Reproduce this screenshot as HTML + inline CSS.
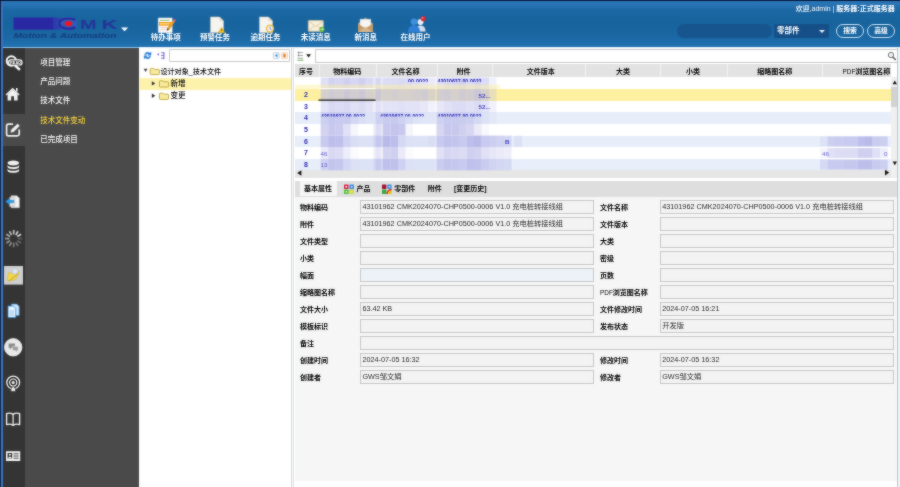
<!DOCTYPE html>
<html lang="zh-CN">
<head>
<meta charset="utf-8">
<title>CMK PLM</title>
<style>
*{box-sizing:border-box;margin:0;padding:0}
html,body{width:900px;height:487px;overflow:hidden;background:#fff}
body{position:relative;font-family:"Liberation Sans","Noto Sans CJK SC",sans-serif;font-size:7.5px;color:#111;line-height:1}
.abs{position:absolute}
#w{position:absolute;left:-6px;top:-6px;width:912px;height:499px;filter:url(#sb)}
#c{position:absolute;left:6px;top:6px;width:900px;height:487px}
#hdr{position:absolute;left:-6px;top:0;width:912px;height:47px;background:linear-gradient(#2b76b6 0,#2873b3 10%,#1b67a3 22%,#17639d 50%,#1a68a4 80%,#2172b2 100%)}
#topline{position:absolute;left:-6px;top:-6px;width:912px;height:7.400px;background:#081d40;z-index:5}
#leftedge{position:absolute;left:-6px;top:0;width:8.700px;height:493px;background:linear-gradient(90deg,#10264c 0,#10264c 7px,#3a74bc 7px)}
#iconcol{position:absolute;left:2px;top:48px;width:23px;height:445px;background:#343434}
#menu{position:absolute;left:25px;top:48px;width:114px;height:445px;background:#4a4a4a}
#iconact{position:absolute;left:2px;top:114px;width:23px;height:32px;background:#4a4a4a}
.mi{position:absolute;left:40.200px;margin-top:.5px;color:#fbfbfb;font-weight:500;font-size:7.5px;white-space:nowrap;height:10px;line-height:10px}
.mi.act{color:#f5d23c}
.tb{position:absolute;top:32.8px;width:60px;text-align:center;color:#fff;font-size:7.5px;font-weight:bold;white-space:nowrap;height:10px;line-height:10px}
#tree{position:absolute;left:139px;top:48px;width:152px;height:445px;background:#fff}
#split{position:absolute;left:290.800px;top:48px;width:3.700px;height:445px;background:#f6f8fa;border-left:1px solid #d5d9dd;border-right:1px solid #dfe3e7}
.tin{position:absolute;background:#fff;border:1px solid #c9c9c9;border-radius:1px}
.tr{position:absolute;left:139.500px;width:151.300px;height:12.400px;line-height:12.400px;font-size:7.5px;white-space:nowrap;font-weight:500;color:#000}
#ghead{position:absolute;left:294.500px;top:63.600px;width:596px;height:13.600px;background:#e3e3e3}
.gh{position:absolute;top:64.600px;height:13px;line-height:13px;font-size:7px;font-weight:bold;text-align:center;white-space:nowrap;color:#000}
.row{position:absolute;left:295px;width:596px;height:11.7px}
.rn{position:absolute;left:295px;width:22px;text-align:center;font-size:7px;font-weight:bold;color:#2a2ab0;height:11.7px;line-height:11.7px}
#tabs{position:absolute;left:294.500px;top:180.700px;width:602.500px;height:16px;background:#dedede}
.tab{position:absolute;top:181px;height:15px;line-height:15px;font-size:7px;font-weight:bold;white-space:nowrap;color:#000}
.lbl{position:absolute;font-size:7px;font-weight:bold;white-space:nowrap;height:13px;line-height:13px;color:#000;margin-top:.8px}
.inp{position:absolute;height:13.400px;line-height:12.400px;margin-top:-.4px;font-size:7.250px;border:1px solid #c6c6c6;background:#f3f3f3;white-space:nowrap;padding-left:1.200px;color:#262626;overflow:hidden}
</style>
</head>
<body>
<svg width="0" height="0" style="position:absolute"><filter id="sb" x="0" y="0" width="100%" height="100%" color-interpolation-filters="sRGB"><feGaussianBlur in="SourceGraphic" stdDeviation="0.8" result="b"/><feComposite in="SourceGraphic" in2="b" operator="arithmetic" k1="0" k2="0.55" k3="0.45" k4="0"/></filter></svg>
<div id="w"><div id="c">
<div id="hdr"></div>
<div id="topline"></div>


<!-- logo -->
<svg class="abs" style="left:10px;top:14px" width="125" height="28" viewBox="10 14 125 28">
<defs><clipPath id="lc"><rect x="53" y="17.5" width="24" height="12.2"/></clipPath></defs>
<rect x="13.5" y="17.5" width="41.500" height="12.2" fill="#2a27a3"/>
<g clip-path="url(#lc)">
<rect x="53" y="17.5" width="8" height="12.2" fill="#2b3cab"/>
<ellipse cx="67.5" cy="23.6" rx="10.5" ry="6.8" fill="#2f5cb8"/>
<path d="M75.2 19.9A9.4 5.3 0 1 0 75.2 27.3" fill="none" stroke="#28299c" stroke-width="2.3"/>
<ellipse cx="68.5" cy="23.6" rx="3.9" ry="2.7" fill="#f0141e"/>
</g>
<text x="80" y="29.4" font-family="Liberation Sans, sans-serif" font-weight="bold" font-size="13.5" textLength="16.5" lengthAdjust="spacingAndGlyphs" fill="#26339a">M</text>
<text x="101.5" y="29.4" font-family="Liberation Sans, sans-serif" font-weight="bold" font-size="13.5" textLength="16" lengthAdjust="spacingAndGlyphs" fill="#26339a">K</text>
<text x="13.5" y="37.900" font-family="Liberation Sans, sans-serif" font-style="italic" font-weight="bold" font-size="6.4" textLength="103" lengthAdjust="spacingAndGlyphs" fill="#173c7e">Motion &amp; Automation</text>
<path d="M121 27.4h7.2l-3.6 3.8z" fill="#fff"/>
</svg>
<!-- header right -->
<div class="abs" style="left:700px;top:3.900px;width:194.700px;text-align:right;color:#fff;font-size:7px;font-weight:500;height:10px;line-height:10px;white-space:nowrap">欢迎,admin | <b>服务器:正式服务器</b></div>
<div class="abs" style="left:677px;top:24px;width:95px;height:14px;border-radius:7px;background:#17558f"></div>
<div class="abs" style="left:774px;top:24px;width:55px;height:14px;border-radius:2px;background:#164f88;color:#fff;font-weight:bold;font-size:7.5px;line-height:14px;padding-left:3px">零部件</div>
<div class="abs" style="left:819px;top:30px;width:0;height:0;border-left:3px solid transparent;border-right:3px solid transparent;border-top:3.5px solid #e8f0f8"></div>
<div class="abs" style="left:836px;top:24px;width:28px;height:14px;border-radius:7px;border:1px solid #cfe0f0;color:#fff;font-weight:bold;font-size:6.800px;line-height:12px;text-align:center">搜索</div>
<div class="abs" style="left:867px;top:24px;width:28px;height:14px;border-radius:7px;border:1px solid #cfe0f0;color:#fff;font-weight:bold;font-size:6.800px;line-height:12px;text-align:center">高级</div>

<!-- toolbar icons -->
<svg class="abs" style="left:156px;top:15px" width="22" height="20" viewBox="156 15 22 20">
<rect x="158.200" y="17.900" width="14" height="14.800" rx=".6" fill="#fbfbfa" stroke="#d8dde3" stroke-width=".5"/>
<path d="M160 20.300h9.500" stroke="#7fb86a" stroke-width=".9"/>
<rect x="159" y="22" width="12.200" height="3.700" fill="#f29a1f"/>
<rect x="159.600" y="23.100" width="10.600" height="1.400" fill="#ffd66b"/>
<path d="M160 27.600h7M160 29.700h6" stroke="#e4c4c0" stroke-width=".8"/>
<path d="M173.300 20.300l1.700 1.200-5.800 8-2.300 1.100.5-2.400z" fill="#f0a428" stroke="#a8681a" stroke-width=".4"/>
<path d="M166.900 30.600l.5-2.400 1.800 1.300z" fill="#5a3a18"/>
<path d="M173.300 20.300l1-1.400 1.700 1.200-1 1.400z" fill="#ee5f92"/>
</svg>
<svg class="abs" style="left:208px;top:16px" width="20" height="18" viewBox="0 0 20 18">
<path d="M2.5 1h9l4 4v11.5h-13z" fill="#f6f4ee" stroke="#cfcabb" stroke-width=".6"/>
<path d="M11.5 1v4h4z" fill="#dedacb"/>
<path d="M13.600 11.400l3.300 5.200h-6.600z" fill="#f6c21c" stroke="#c3920c" stroke-width=".5"/>
<path d="M13.600 13.200v1.700" stroke="#6a5000" stroke-width=".8"/>
</svg>
<svg class="abs" style="left:257px;top:16px" width="20" height="18" viewBox="0 0 20 18">
<path d="M2.5 1h9l4 4v11.5h-13z" fill="#f6f4ee" stroke="#cfcabb" stroke-width=".6"/>
<path d="M11.5 1v4h4z" fill="#dedacb"/>
<circle cx="13" cy="12.600" r="3.500" fill="#f1f0fa" stroke="#ecbb30" stroke-width="1.400"/>
<path d="M13 10.600v2.200l1.500.8" stroke="#6a72c0" stroke-width=".8" fill="none"/>
</svg>
<svg class="abs" style="left:307px;top:19px" width="20" height="14" viewBox="0 0 20 14">
<rect x="1.3" y="1.5" width="15" height="10.8" rx=".8" fill="#f7f0dc" stroke="#d3c49c" stroke-width=".7"/>
<path d="M1.6 2l7.2 5.6L16 2M1.6 12l5.4-5M16 12l-5.4-5" fill="none" stroke="#d9b98a" stroke-width=".8"/>
<circle cx="15" cy="10.3" r="2.6" fill="#5cb531"/>
<path d="M13.6 10.3h2.4m-1-1.2l1.2 1.2-1.2 1.2" stroke="#fff" stroke-width=".7" fill="none"/>
</svg>
<svg class="abs" style="left:356.300px;top:16.300px" width="20.500" height="18" viewBox="0 0 18 18" preserveAspectRatio="none">
<path d="M2 7.5L8.3 1.8l6.3 5.7V16H2z" fill="#d7b183"/>
<path d="M3.6 3.2h9.4v8.5H3.6z" fill="#f6f6f4" stroke="#d8d8d2" stroke-width=".4"/>
<path d="M2 7.8l6.3 4.6 6.3-4.6V16H2z" fill="#c79b66"/>
<path d="M2 16l6.3-5 6.3 5z" fill="#d9b58a"/>
</svg>
<svg class="abs" style="left:406px;top:15.200px" width="24" height="19" viewBox="0 0 24 19">
<circle cx="14.5" cy="7" r="3" fill="#e8eef8"/>
<path d="M9.5 16.5c0-4 2-6 5-6s5 2 5 6z" fill="#d5dff0"/>
<circle cx="8" cy="6.8" r="3.3" fill="#3f8fe0"/>
<path d="M2 17.2c0-4.6 2.4-7 6-7s6 2.400 6 7z" fill="#2f7fd6"/>
<circle cx="17.3" cy="3.6" r="2.7" fill="#e0242c"/>
<circle cx="16.6" cy="2.9" r=".8" fill="#f6a0a0"/>
</svg>
<!-- header toolbar labels -->
<div class="tb" style="left:135.8px">待办事项</div>
<div class="tb" style="left:185px">预警任务</div>
<div class="tb" style="left:235.4px">逾期任务</div>
<div class="tb" style="left:285.8px">未读消息</div>
<div class="tb" style="left:335.8px">新消息</div>
<div class="tb" style="left:385.4px">在线用户</div>

<!-- sidebar -->
<div class="abs" style="left:0;top:47px;width:906px;height:1px;background:#e6eff8"></div>
<div class="abs" style="left:-6px;top:46.800px;width:145px;height:1.200px;background:#8ac4ee"></div>
<div id="iconcol"></div>
<div id="menu"></div>
<div id="iconact"></div>
<div id="leftedge"></div>
<!-- sidebar icons -->
<svg class="abs" style="left:2px;top:48px" width="24" height="439" viewBox="2 48 24 439">
<!-- 1 search -->
<circle cx="11.400" cy="61" r="4.700" fill="none" stroke="#fafafa" stroke-width="2"/>
<path d="M15.400 65.800l3.800 3.400" stroke="#fafafa" stroke-width="2.500" stroke-linecap="round"/>
<rect x="8.600" y="59.800" width="13.400" height="5.200" rx="2.600" fill="#2a2a2a" stroke="#fafafa" stroke-width="1.200"/>
<text x="10" y="63.900" font-family="Liberation Sans, sans-serif" font-weight="bold" font-size="3.900" fill="#fff">READ</text>
<!-- 2 home -->
<path d="M5.6 94.4l7-6.6 7 6.600-1 1-6-5.600-6 5.600z" fill="#f2f2f2"/>
<path d="M7.600 94.200l5-4.600 5 4.600v6.400h-3.600v-4.400h-2.800v4.400h-3.600z" fill="#f2f2f2"/>
<rect x="16" y="88" width="1.600" height="3.400" fill="#f2f2f2"/>
<!-- 3 edit -->
<path d="M13 124.200H8.400a1.800 1.800 0 0 0-1.800 1.800v8a1.800 1.800 0 0 0 1.800 1.800h9a1.800 1.800 0 0 0 1.800-1.800v-4.600" fill="none" stroke="#f2f2f2" stroke-width="1.700"/>
<path d="M10.200 133l.8-3.400 6.600-6.200 2.400 2.400-6.400 6.400z" fill="#f2f2f2" stroke="#484848" stroke-width=".5"/>
<!-- 4 db -->
<ellipse cx="13.300" cy="163" rx="5.800" ry="2.400" fill="#f2f2f2"/>
<path d="M7.500 164.800c0 3.200 11.600 3.200 11.600 0v2c0 3.200-11.600 3.200-11.600 0z" fill="#f2f2f2"/>
<path d="M7.500 168.400c0 3.200 11.600 3.200 11.600 0v2c0 3.200-11.600 3.200-11.600 0z" fill="#f2f2f2"/>
<!-- 5 doc arrow -->
<path d="M11 195.800h6l2.400 2.400v9.600H11z" fill="#f4f4f4" stroke="#bdbdbd" stroke-width=".5"/>
<path d="M9.400 197.400h5.400v9H9.400z" fill="#e2e2e2" stroke="#aaa" stroke-width=".4"/>
<path d="M5.600 201.400l3.800-3.200v2h4.400v2.600H9.400v2z" fill="#2b9be6" stroke="#1877c0" stroke-width=".4"/>
<!-- 6 spinner -->
<path d="M17.9 238.6L22.3 238.6" stroke="#d8d8d8" stroke-opacity="0.25" stroke-width="1.7"/>
<path d="M17.3 240.7L21.1 242.9" stroke="#d8d8d8" stroke-opacity="0.32" stroke-width="1.7"/>
<path d="M15.8 242.2L18.0 246.0" stroke="#d8d8d8" stroke-opacity="0.39" stroke-width="1.7"/>
<path d="M13.7 242.8L13.7 247.2" stroke="#d8d8d8" stroke-opacity="0.45" stroke-width="1.7"/>
<path d="M11.6 242.2L9.4 246.0" stroke="#d8d8d8" stroke-opacity="0.52" stroke-width="1.7"/>
<path d="M10.1 240.7L6.3 242.9" stroke="#d8d8d8" stroke-opacity="0.59" stroke-width="1.7"/>
<path d="M9.5 238.6L5.1 238.6" stroke="#d8d8d8" stroke-opacity="0.66" stroke-width="1.7"/>
<path d="M10.1 236.5L6.3 234.3" stroke="#d8d8d8" stroke-opacity="0.73" stroke-width="1.7"/>
<path d="M11.6 235.0L9.4 231.2" stroke="#d8d8d8" stroke-opacity="0.80" stroke-width="1.7"/>
<path d="M13.7 234.4L13.7 230.0" stroke="#d8d8d8" stroke-opacity="0.86" stroke-width="1.7"/>
<path d="M15.8 235.0L18.0 231.2" stroke="#d8d8d8" stroke-opacity="0.93" stroke-width="1.7"/>
<path d="M17.3 236.5L21.1 234.3" stroke="#d8d8d8" stroke-opacity="1.00" stroke-width="1.7"/>
<!-- 7 folder in gray box -->
<rect x="4" y="266" width="19" height="18.600" fill="#cfcfcf"/>
<path d="M7 281l1.600-8.600 5 1.400 5.800-2.400-3.600 8.200z" fill="#f0d84a" stroke="#c9a820" stroke-width=".4"/>
<circle cx="15" cy="271.400" r="2.800" fill="#dbe6f6" stroke="#a8bbd8" stroke-width=".5"/>
<path d="M8.800 281.400l9.600-8" stroke="#c49a3a" stroke-width="1"/>
<!-- 8 blue docs -->
<path d="M11.400 304h5.400l2.400 2.400v9.200h-7.800z" fill="#cfe6fa" stroke="#3c8cd4" stroke-width=".7"/>
<path d="M8 306h5.400l2.400 2.400v9.200H8z" fill="#e8f4ff" stroke="#2f86d6" stroke-width=".8"/>
<path d="M9.600 311h4.400M9.600 313h4.400M9.600 315h4.400" stroke="#5aa2e2" stroke-width=".6"/>
<!-- 9 chat -->
<circle cx="13.200" cy="347.300" r="8.700" fill="#e9e9e9"/>
<circle cx="13.200" cy="347.300" r="8.700" fill="none" stroke="#fafafa" stroke-width=".8"/>
<path d="M8.600 343.400h6.400v4.400h-3.400l-1.800 1.800v-1.800H8.600z" fill="#8a8a8a"/>
<path d="M12.600 346.400h5.600v4.200h-1.200v1.700l-1.700-1.700h-2.700z" fill="#9d9d9d" stroke="#e9e9e9" stroke-width=".5"/>
<!-- 10 podcast -->
<circle cx="13.200" cy="382.600" r="6.400" fill="none" stroke="#f2f2f2" stroke-width="1.300"/>
<circle cx="13.200" cy="382.600" r="3.600" fill="none" stroke="#f2f2f2" stroke-width="1.200"/>
<circle cx="13.200" cy="382.600" r="1.500" fill="#f2f2f2"/>
<path d="M10.800 391.400c0-3.200 1-4.600 2.400-4.600s2.400 1.400 2.400 4.600z" fill="#f2f2f2" stroke="#343434" stroke-width=".7"/>
<!-- 11 book -->
<path d="M6.600 413.600c2.400-.9 4.600-.6 6.500.8 1.900-1.400 4.100-1.700 6.500-.8v11c-2.400-.9-4.600-.6-6.500.8-1.900-1.400-4.100-1.700-6.500-.8z" fill="none" stroke="#f2f2f2" stroke-width="1.400" stroke-linejoin="round"/>
<path d="M13.100 414.600v10.600" stroke="#f2f2f2" stroke-width="1.200"/>
<!-- 12 id card -->
<rect x="6" y="451.200" width="14.200" height="9.800" fill="#f2f2f2"/>
<rect x="7.600" y="453" width="4.600" height="5.400" fill="#343434"/>
<circle cx="9.900" cy="454.800" r="1" fill="#f2f2f2"/>
<path d="M8.300 458.200c0-1.800 3.200-1.800 3.200 0z" fill="#f2f2f2"/>
<path d="M13.600 453.800h5M13.600 456h5M13.600 458.200h5" stroke="#343434" stroke-width=".9"/>
</svg>

<div class="mi" style="top:57px">项目管理</div>
<div class="mi" style="top:76.500px">产品问题</div>
<div class="mi" style="top:95.900px">技术文件</div>
<div class="mi act" style="top:115.300px">技术文件变动</div>
<div class="mi" style="top:134.500px">已完成项目</div>

<!-- tree -->
<div id="tree"></div>
<div id="split"></div>
<div class="tin" style="left:169px;top:49px;width:121px;height:13px"></div>
<div class="tr" style="top:65.800px;padding-left:20.900px;font-size:7.100px">设计对象_技术文件</div>
<div class="tr" style="top:77.600px;background:#fdf2ac;padding-left:31px">新增</div>
<div class="tr" style="top:89.900px;padding-left:31px">变更</div>
<svg class="abs" style="left:139px;top:48px" width="152" height="56" viewBox="139 48 152 56">
<!-- refresh -->
<path d="M144.600 54.600a3.200 3.200 0 0 1 5.400-1.400l1-1v3h-3l1-1a2 2 0 0 0-3.200 .6z" fill="#2b7fd8" stroke="#2b7fd8" stroke-width=".5"/>
<path d="M150.600 56.400a3.200 3.200 0 0 1-5.400 1.400l-1 1v-3h3l-1 1a2 2 0 0 0 3.200-.6z" fill="#2b7fd8" stroke="#2b7fd8" stroke-width=".5"/>
<!-- tree toggle -->
<path d="M157 54.400l2-1.400v2.800z" fill="#7a6ad0"/>
<path d="M161 52.600h1.600M163.800 52.400v6M161 55.400h2.800M161 58.200h2.800" stroke="#6a5ac8" stroke-width=".8" fill="none"/>
<circle cx="163.600" cy="53" r="1" fill="#8a7ae0"/><circle cx="163.600" cy="55.600" r="1" fill="#8a7ae0"/><circle cx="163.600" cy="58.200" r="1" fill="#8a7ae0"/>
<!-- input icons -->
<rect x="273.200" y="52.600" width="6" height="6" rx="1" fill="#eef4fa" stroke="#9fb6c8" stroke-width=".5"/>
<path d="M275 55.600l2.400-1.800v3.600z" fill="#2f84d0"/>
<rect x="281.400" y="52.600" width="6" height="6" rx="1" fill="#fff4ea" stroke="#d8b49a" stroke-width=".5"/>
<rect x="283.200" y="53.800" width="2.400" height="3.600" fill="#f07818"/>
<!-- tree arrows -->
<path d="M143.600 68.800h4l-2 3.200z" fill="#444"/>
<path d="M151.800 81.200l3.600 2.200-3.600 2.200z" fill="#333"/>
<path d="M151.800 93.600l3.600 2.200-3.600 2.200z" fill="#333"/>
<!-- folders -->
<g id="fold"><path d="M150.200 69.400a1 1 0 0 1 1-1h2.400l1 1h3.800a1 1 0 0 1 1 1v3.200a1 1 0 0 1-1 1h-7.200a1 1 0 0 1-1-1z" fill="#f8eaa0" stroke="#b89a20" stroke-width=".8"/></g>
<path d="M159.400 81.800a1 1 0 0 1 1-1h2.400l1 1h3.800a1 1 0 0 1 1 1v3.200a1 1 0 0 1-1 1h-7.200a1 1 0 0 1-1-1z" fill="#f8eaa0" stroke="#b89a20" stroke-width=".8"/>
<path d="M159.400 94.200a1 1 0 0 1 1-1h2.400l1 1h3.800a1 1 0 0 1 1 1v3.200a1 1 0 0 1-1 1h-7.200a1 1 0 0 1-1-1z" fill="#f8eaa0" stroke="#b89a20" stroke-width=".8"/>
</svg>
<!-- grid -->
<div class="tin" style="left:314.500px;top:49px;width:583px;height:13.600px;border-right:none"></div>
<div id="ghead"></div>
<div class="gh" style="left:266.0px;width:80px">序号</div>
<div class="gh" style="left:307.3px;width:80px">物料编码</div>
<div class="gh" style="left:365.6px;width:80px">文件名称</div>
<div class="gh" style="left:423.6px;width:80px">附件</div>
<div class="gh" style="left:500.7px;width:80px">文件版本</div>
<div class="gh" style="left:583.0px;width:80px">大类</div>
<div class="gh" style="left:653.1px;width:80px">小类</div>
<div class="gh" style="left:734.8px;width:80px">缩略图名称</div>
<div class="gh" style="left:830px;width:60.300px;text-align:right"><span style="font-weight:normal;font-size:6.400px">PDF</span>浏览图名称</div>
<div class="abs" style="left:318.8px;top:64px;width:1px;height:13px;background:#f2f2f2"></div>
<div class="abs" style="left:375.7px;top:64px;width:1px;height:13px;background:#f2f2f2"></div>
<div class="abs" style="left:437.0px;top:64px;width:1px;height:13px;background:#f2f2f2"></div>
<div class="abs" style="left:491.5px;top:64px;width:1px;height:13px;background:#f2f2f2"></div>
<div class="abs" style="left:584.8px;top:64px;width:1px;height:13px;background:#f2f2f2"></div>
<div class="abs" style="left:659.5px;top:64px;width:1px;height:13px;background:#f2f2f2"></div>
<div class="abs" style="left:726.5px;top:64px;width:1px;height:13px;background:#f2f2f2"></div>
<div class="abs" style="left:822.1px;top:64px;width:1px;height:13px;background:#f2f2f2"></div>
<div class="row" style="top:77.2px;background:#fff"></div>
<div class="row" style="top:88.9px;background:#fdf0a0"></div>
<div class="row" style="top:100.6px;background:#fff"></div>
<div class="row" style="top:112.3px;background:#e7eefa"></div>
<div class="row" style="top:124px;background:#fff"></div>
<div class="row" style="top:135.7px;background:#e7eefa"></div>
<div class="row" style="top:147.4px;background:#fff"></div>
<div class="row" style="top:159.1px;background:#e7eefa"></div>
<div class="rn" style="top:88.9px">2</div>
<div class="rn" style="top:100.6px">3</div>
<div class="rn" style="top:112.3px">4</div>
<div class="rn" style="top:124px">5</div>
<div class="rn" style="top:135.7px">6</div>
<div class="rn" style="top:147.4px">7</div>
<div class="rn" style="top:159.1px">8</div>

<!-- scrollbars -->
<div class="abs" style="left:295px;top:170px;width:596px;height:8px;background:#e6e6e6"></div>
<div class="abs" style="left:890.500px;top:77px;width:7px;height:101px;background:#f0f0f0"></div>
<div class="abs" style="left:890.500px;top:86.500px;width:7px;height:20.500px;background:#d2d2d2"></div>
<div class="abs" style="left:897px;top:48px;width:1px;height:445px;background:#b9c6d3"></div>
<div class="abs" style="left:898px;top:48px;width:8px;height:445px;background:#eef2f6"></div>

<svg class="abs" style="left:295px;top:48px" width="605" height="132" viewBox="295 48 605 132">
<rect x="320.7" y="77.5" width="7.5" height="11.6" fill="rgb(186,186,234)" fill-opacity="0.45"/>
<rect x="328.2" y="77.5" width="7.5" height="11.6" fill="rgb(186,186,234)" fill-opacity="0.65"/>
<rect x="335.7" y="77.5" width="7.5" height="11.6" fill="rgb(186,186,234)" fill-opacity="0.60"/>
<rect x="343.2" y="77.5" width="7.5" height="11.6" fill="rgb(186,186,234)" fill-opacity="0.70"/>
<rect x="350.7" y="77.5" width="7.5" height="11.6" fill="rgb(186,186,234)" fill-opacity="0.60"/>
<rect x="358.2" y="77.5" width="7.5" height="11.6" fill="rgb(186,186,234)" fill-opacity="0.70"/>
<rect x="365.7" y="77.5" width="7.5" height="11.6" fill="rgb(186,186,234)" fill-opacity="0.55"/>
<rect x="373.2" y="77.5" width="7.5" height="11.6" fill="rgb(186,186,234)" fill-opacity="0.35"/>
<rect x="375.5" y="77.5" width="7.5" height="11.6" fill="rgb(186,186,234)" fill-opacity="0.35"/>
<rect x="383.0" y="77.5" width="7.5" height="11.6" fill="rgb(186,186,234)" fill-opacity="0.50"/>
<rect x="390.5" y="77.5" width="7.5" height="11.6" fill="rgb(186,186,234)" fill-opacity="0.50"/>
<rect x="398.0" y="77.5" width="7.5" height="11.6" fill="rgb(186,186,234)" fill-opacity="0.55"/>
<rect x="405.5" y="77.5" width="7.5" height="11.6" fill="rgb(186,186,234)" fill-opacity="0.50"/>
<rect x="413.0" y="77.5" width="7.5" height="11.6" fill="rgb(186,186,234)" fill-opacity="0.45"/>
<rect x="420.5" y="77.5" width="7.5" height="11.6" fill="rgb(186,186,234)" fill-opacity="0.40"/>
<rect x="428.0" y="77.5" width="7.5" height="11.6" fill="rgb(186,186,234)" fill-opacity="0.30"/>
<rect x="436.5" y="77.5" width="7.5" height="11.6" fill="rgb(186,186,234)" fill-opacity="0.45"/>
<rect x="444.0" y="77.5" width="7.5" height="11.6" fill="rgb(186,186,234)" fill-opacity="0.55"/>
<rect x="451.5" y="77.5" width="7.5" height="11.6" fill="rgb(186,186,234)" fill-opacity="0.60"/>
<rect x="459.0" y="77.5" width="7.5" height="11.6" fill="rgb(186,186,234)" fill-opacity="0.65"/>
<rect x="466.5" y="77.5" width="7.5" height="11.6" fill="rgb(186,186,234)" fill-opacity="0.50"/>
<rect x="474.0" y="77.5" width="7.5" height="11.6" fill="rgb(186,186,234)" fill-opacity="0.60"/>
<rect x="481.5" y="77.5" width="7.5" height="11.6" fill="rgb(186,186,234)" fill-opacity="0.50"/>
<rect x="489.0" y="77.5" width="7.5" height="11.6" fill="rgb(186,186,234)" fill-opacity="0.20"/>
<rect x="320.7" y="89.1" width="7.5" height="11.6" fill="rgb(186,186,234)" fill-opacity="0.60"/>
<rect x="328.2" y="89.1" width="7.5" height="11.6" fill="rgb(186,186,234)" fill-opacity="0.70"/>
<rect x="335.7" y="89.1" width="7.5" height="11.6" fill="rgb(186,186,234)" fill-opacity="0.65"/>
<rect x="343.2" y="89.1" width="7.5" height="11.6" fill="rgb(186,186,234)" fill-opacity="0.75"/>
<rect x="350.7" y="89.1" width="7.5" height="11.6" fill="rgb(186,186,234)" fill-opacity="0.65"/>
<rect x="358.2" y="89.1" width="7.5" height="11.6" fill="rgb(186,186,234)" fill-opacity="0.75"/>
<rect x="365.7" y="89.1" width="7.5" height="11.6" fill="rgb(186,186,234)" fill-opacity="0.60"/>
<rect x="373.2" y="89.1" width="7.5" height="11.6" fill="rgb(186,186,234)" fill-opacity="0.50"/>
<rect x="375.5" y="89.1" width="7.5" height="11.6" fill="rgb(186,186,234)" fill-opacity="0.55"/>
<rect x="383.0" y="89.1" width="7.5" height="11.6" fill="rgb(186,186,234)" fill-opacity="0.60"/>
<rect x="390.5" y="89.1" width="7.5" height="11.6" fill="rgb(186,186,234)" fill-opacity="0.65"/>
<rect x="398.0" y="89.1" width="7.5" height="11.6" fill="rgb(186,186,234)" fill-opacity="0.60"/>
<rect x="405.5" y="89.1" width="7.5" height="11.6" fill="rgb(186,186,234)" fill-opacity="0.60"/>
<rect x="413.0" y="89.1" width="7.5" height="11.6" fill="rgb(186,186,234)" fill-opacity="0.65"/>
<rect x="420.5" y="89.1" width="7.5" height="11.6" fill="rgb(186,186,234)" fill-opacity="0.70"/>
<rect x="428.0" y="89.1" width="7.5" height="11.6" fill="rgb(186,186,234)" fill-opacity="0.55"/>
<rect x="436.5" y="89.1" width="7.5" height="11.6" fill="rgb(186,186,234)" fill-opacity="0.65"/>
<rect x="444.0" y="89.1" width="7.5" height="11.6" fill="rgb(186,186,234)" fill-opacity="0.70"/>
<rect x="451.5" y="89.1" width="7.5" height="11.6" fill="rgb(186,186,234)" fill-opacity="0.60"/>
<rect x="459.0" y="89.1" width="7.5" height="11.6" fill="rgb(186,186,234)" fill-opacity="0.70"/>
<rect x="466.5" y="89.1" width="7.5" height="11.6" fill="rgb(186,186,234)" fill-opacity="0.65"/>
<rect x="474.0" y="89.1" width="7.5" height="11.6" fill="rgb(186,186,234)" fill-opacity="0.75"/>
<rect x="481.5" y="89.1" width="7.5" height="11.6" fill="rgb(186,186,234)" fill-opacity="0.60"/>
<rect x="489.0" y="89.1" width="7.5" height="11.6" fill="rgb(186,186,234)" fill-opacity="0.30"/>
<rect x="320.7" y="100.7" width="7.5" height="11.6" fill="rgb(186,186,234)" fill-opacity="0.40"/>
<rect x="328.2" y="100.7" width="7.5" height="11.6" fill="rgb(186,186,234)" fill-opacity="0.55"/>
<rect x="335.7" y="100.7" width="7.5" height="11.6" fill="rgb(186,186,234)" fill-opacity="0.50"/>
<rect x="343.2" y="100.7" width="7.5" height="11.6" fill="rgb(186,186,234)" fill-opacity="0.55"/>
<rect x="350.7" y="100.7" width="7.5" height="11.6" fill="rgb(186,186,234)" fill-opacity="0.45"/>
<rect x="358.2" y="100.7" width="7.5" height="11.6" fill="rgb(186,186,234)" fill-opacity="0.50"/>
<rect x="365.7" y="100.7" width="7.5" height="11.6" fill="rgb(186,186,234)" fill-opacity="0.40"/>
<rect x="373.2" y="100.7" width="7.5" height="11.6" fill="rgb(186,186,234)" fill-opacity="0.20"/>
<rect x="375.5" y="100.7" width="7.5" height="11.6" fill="rgb(186,186,234)" fill-opacity="0.30"/>
<rect x="383.0" y="100.7" width="7.5" height="11.6" fill="rgb(186,186,234)" fill-opacity="0.40"/>
<rect x="390.5" y="100.7" width="7.5" height="11.6" fill="rgb(186,186,234)" fill-opacity="0.40"/>
<rect x="398.0" y="100.7" width="7.5" height="11.6" fill="rgb(186,186,234)" fill-opacity="0.45"/>
<rect x="405.5" y="100.7" width="7.5" height="11.6" fill="rgb(186,186,234)" fill-opacity="0.40"/>
<rect x="413.0" y="100.7" width="7.5" height="11.6" fill="rgb(186,186,234)" fill-opacity="0.40"/>
<rect x="420.5" y="100.7" width="7.5" height="11.6" fill="rgb(186,186,234)" fill-opacity="0.35"/>
<rect x="428.0" y="100.7" width="7.5" height="11.6" fill="rgb(186,186,234)" fill-opacity="0.20"/>
<rect x="436.5" y="100.7" width="7.5" height="11.6" fill="rgb(186,186,234)" fill-opacity="0.35"/>
<rect x="444.0" y="100.7" width="7.5" height="11.6" fill="rgb(186,186,234)" fill-opacity="0.45"/>
<rect x="451.5" y="100.7" width="7.5" height="11.6" fill="rgb(186,186,234)" fill-opacity="0.50"/>
<rect x="459.0" y="100.7" width="7.5" height="11.6" fill="rgb(186,186,234)" fill-opacity="0.50"/>
<rect x="466.5" y="100.7" width="7.5" height="11.6" fill="rgb(186,186,234)" fill-opacity="0.45"/>
<rect x="474.0" y="100.7" width="7.5" height="11.6" fill="rgb(186,186,234)" fill-opacity="0.50"/>
<rect x="481.5" y="100.7" width="7.5" height="11.6" fill="rgb(186,186,234)" fill-opacity="0.40"/>
<rect x="489.0" y="100.7" width="7.5" height="11.6" fill="rgb(186,186,234)" fill-opacity="0.20"/>
<rect x="320.7" y="112.3" width="7.5" height="11.6" fill="rgb(186,186,234)" fill-opacity="0.60"/>
<rect x="328.2" y="112.3" width="7.5" height="11.6" fill="rgb(186,186,234)" fill-opacity="0.75"/>
<rect x="335.7" y="112.3" width="7.5" height="11.6" fill="rgb(186,186,234)" fill-opacity="0.70"/>
<rect x="343.2" y="112.3" width="7.5" height="11.6" fill="rgb(186,186,234)" fill-opacity="0.70"/>
<rect x="350.7" y="112.3" width="7.5" height="11.6" fill="rgb(186,186,234)" fill-opacity="0.45"/>
<rect x="358.2" y="112.3" width="7.5" height="11.6" fill="rgb(186,186,234)" fill-opacity="0.30"/>
<rect x="365.7" y="112.3" width="7.5" height="11.6" fill="rgb(186,186,234)" fill-opacity="0.20"/>
<rect x="373.2" y="112.3" width="7.5" height="11.6" fill="rgb(186,186,234)" fill-opacity="0.15"/>
<rect x="375.5" y="112.3" width="7.5" height="11.6" fill="rgb(186,186,234)" fill-opacity="0.50"/>
<rect x="383.0" y="112.3" width="7.5" height="11.6" fill="rgb(186,186,234)" fill-opacity="0.65"/>
<rect x="390.5" y="112.3" width="7.5" height="11.6" fill="rgb(186,186,234)" fill-opacity="0.70"/>
<rect x="398.0" y="112.3" width="7.5" height="11.6" fill="rgb(186,186,234)" fill-opacity="0.55"/>
<rect x="405.5" y="112.3" width="7.5" height="11.6" fill="rgb(186,186,234)" fill-opacity="0.35"/>
<rect x="413.0" y="112.3" width="7.5" height="11.6" fill="rgb(186,186,234)" fill-opacity="0.20"/>
<rect x="420.5" y="112.3" width="7.5" height="11.6" fill="rgb(186,186,234)" fill-opacity="0.15"/>
<rect x="428.0" y="112.3" width="7.5" height="11.6" fill="rgb(186,186,234)" fill-opacity="0.15"/>
<rect x="436.5" y="112.3" width="7.5" height="11.6" fill="rgb(186,186,234)" fill-opacity="0.55"/>
<rect x="444.0" y="112.3" width="7.5" height="11.6" fill="rgb(186,186,234)" fill-opacity="0.70"/>
<rect x="451.5" y="112.3" width="7.5" height="11.6" fill="rgb(186,186,234)" fill-opacity="0.70"/>
<rect x="459.0" y="112.3" width="7.5" height="11.6" fill="rgb(186,186,234)" fill-opacity="0.65"/>
<rect x="466.5" y="112.3" width="7.5" height="11.6" fill="rgb(186,186,234)" fill-opacity="0.60"/>
<rect x="474.0" y="112.3" width="7.5" height="11.6" fill="rgb(186,186,234)" fill-opacity="0.40"/>
<rect x="481.5" y="112.3" width="7.5" height="11.6" fill="rgb(186,186,234)" fill-opacity="0.25"/>
<rect x="489.0" y="112.3" width="7.5" height="11.6" fill="rgb(186,186,234)" fill-opacity="0.10"/>
<rect x="320.7" y="123.9" width="7.5" height="11.6" fill="rgb(186,186,234)" fill-opacity="0.65"/>
<rect x="328.2" y="123.9" width="7.5" height="11.6" fill="rgb(186,186,234)" fill-opacity="0.80"/>
<rect x="335.7" y="123.9" width="7.5" height="11.6" fill="rgb(186,186,234)" fill-opacity="0.75"/>
<rect x="343.2" y="123.9" width="7.5" height="11.6" fill="rgb(186,186,234)" fill-opacity="0.45"/>
<rect x="350.7" y="123.9" width="7.5" height="11.6" fill="rgb(186,186,234)" fill-opacity="0.15"/>
<rect x="373.2" y="123.9" width="7.5" height="11.6" fill="rgb(186,186,234)" fill-opacity="0.25"/>
<rect x="375.5" y="123.9" width="7.5" height="11.6" fill="rgb(186,186,234)" fill-opacity="0.35"/>
<rect x="383.0" y="123.9" width="7.5" height="11.6" fill="rgb(186,186,234)" fill-opacity="0.80"/>
<rect x="390.5" y="123.9" width="7.5" height="11.6" fill="rgb(186,186,234)" fill-opacity="0.85"/>
<rect x="398.0" y="123.9" width="7.5" height="11.6" fill="rgb(186,186,234)" fill-opacity="0.80"/>
<rect x="405.5" y="123.9" width="7.5" height="11.6" fill="rgb(186,186,234)" fill-opacity="0.15"/>
<rect x="436.5" y="123.9" width="7.5" height="11.6" fill="rgb(186,186,234)" fill-opacity="0.60"/>
<rect x="444.0" y="123.9" width="7.5" height="11.6" fill="rgb(186,186,234)" fill-opacity="0.80"/>
<rect x="451.5" y="123.9" width="7.5" height="11.6" fill="rgb(186,186,234)" fill-opacity="0.80"/>
<rect x="459.0" y="123.9" width="7.5" height="11.6" fill="rgb(186,186,234)" fill-opacity="0.70"/>
<rect x="466.5" y="123.9" width="7.5" height="11.6" fill="rgb(186,186,234)" fill-opacity="0.60"/>
<rect x="474.0" y="123.9" width="7.5" height="11.6" fill="rgb(186,186,234)" fill-opacity="0.30"/>
<rect x="481.5" y="123.9" width="7.5" height="11.6" fill="rgb(186,186,234)" fill-opacity="0.10"/>
<rect x="320.7" y="135.5" width="7.5" height="11.6" fill="rgb(186,186,234)" fill-opacity="0.70"/>
<rect x="328.2" y="135.5" width="7.5" height="11.6" fill="rgb(186,186,234)" fill-opacity="0.95"/>
<rect x="335.7" y="135.5" width="7.5" height="11.6" fill="rgb(186,186,234)" fill-opacity="0.90"/>
<rect x="343.2" y="135.5" width="7.5" height="11.6" fill="rgb(186,186,234)" fill-opacity="0.50"/>
<rect x="350.7" y="135.5" width="7.5" height="11.6" fill="rgb(186,186,234)" fill-opacity="0.30"/>
<rect x="358.2" y="135.5" width="7.5" height="11.6" fill="rgb(186,186,234)" fill-opacity="0.25"/>
<rect x="365.7" y="135.5" width="7.5" height="11.6" fill="rgb(186,186,234)" fill-opacity="0.25"/>
<rect x="373.2" y="135.5" width="7.5" height="11.6" fill="rgb(186,186,234)" fill-opacity="0.45"/>
<rect x="375.5" y="135.5" width="7.5" height="11.6" fill="rgb(186,186,234)" fill-opacity="0.55"/>
<rect x="383.0" y="135.5" width="7.5" height="11.6" fill="rgb(186,186,234)" fill-opacity="1.00"/>
<rect x="390.5" y="135.5" width="7.5" height="11.6" fill="rgb(186,186,234)" fill-opacity="0.95"/>
<rect x="398.0" y="135.5" width="7.5" height="11.6" fill="rgb(186,186,234)" fill-opacity="0.40"/>
<rect x="405.5" y="135.5" width="7.5" height="11.6" fill="rgb(186,186,234)" fill-opacity="0.25"/>
<rect x="413.0" y="135.5" width="7.5" height="11.6" fill="rgb(186,186,234)" fill-opacity="0.20"/>
<rect x="420.5" y="135.5" width="7.5" height="11.6" fill="rgb(186,186,234)" fill-opacity="0.20"/>
<rect x="428.0" y="135.5" width="7.5" height="11.6" fill="rgb(186,186,234)" fill-opacity="0.30"/>
<rect x="436.5" y="135.5" width="7.5" height="11.6" fill="rgb(186,186,234)" fill-opacity="0.70"/>
<rect x="444.0" y="135.5" width="7.5" height="11.6" fill="rgb(186,186,234)" fill-opacity="0.85"/>
<rect x="451.5" y="135.5" width="7.5" height="11.6" fill="rgb(186,186,234)" fill-opacity="0.80"/>
<rect x="459.0" y="135.5" width="7.5" height="11.6" fill="rgb(186,186,234)" fill-opacity="0.70"/>
<rect x="466.5" y="135.5" width="7.5" height="11.6" fill="rgb(186,186,234)" fill-opacity="0.95"/>
<rect x="474.0" y="135.5" width="7.5" height="11.6" fill="rgb(186,186,234)" fill-opacity="1.00"/>
<rect x="481.5" y="135.5" width="7.5" height="11.6" fill="rgb(186,186,234)" fill-opacity="0.70"/>
<rect x="489.0" y="135.5" width="7.5" height="11.6" fill="rgb(186,186,234)" fill-opacity="0.60"/>
<rect x="496.5" y="135.5" width="7.5" height="11.6" fill="rgb(186,186,234)" fill-opacity="0.50"/>
<rect x="504.0" y="135.5" width="7.5" height="11.6" fill="rgb(186,186,234)" fill-opacity="0.45"/>
<rect x="320.7" y="147.1" width="7.5" height="11.6" fill="rgb(186,186,234)" fill-opacity="0.30"/>
<rect x="328.2" y="147.1" width="7.5" height="11.6" fill="rgb(186,186,234)" fill-opacity="0.55"/>
<rect x="335.7" y="147.1" width="7.5" height="11.6" fill="rgb(186,186,234)" fill-opacity="0.50"/>
<rect x="343.2" y="147.1" width="7.5" height="11.6" fill="rgb(186,186,234)" fill-opacity="0.25"/>
<rect x="350.7" y="147.1" width="7.5" height="11.6" fill="rgb(186,186,234)" fill-opacity="0.05"/>
<rect x="373.2" y="147.1" width="7.5" height="11.6" fill="rgb(186,186,234)" fill-opacity="0.20"/>
<rect x="375.5" y="147.1" width="7.5" height="11.6" fill="rgb(186,186,234)" fill-opacity="0.20"/>
<rect x="383.0" y="147.1" width="7.5" height="11.6" fill="rgb(186,186,234)" fill-opacity="0.65"/>
<rect x="390.5" y="147.1" width="7.5" height="11.6" fill="rgb(186,186,234)" fill-opacity="0.70"/>
<rect x="398.0" y="147.1" width="7.5" height="11.6" fill="rgb(186,186,234)" fill-opacity="0.30"/>
<rect x="405.5" y="147.1" width="7.5" height="11.6" fill="rgb(186,186,234)" fill-opacity="0.05"/>
<rect x="436.5" y="147.1" width="7.5" height="11.6" fill="rgb(186,186,234)" fill-opacity="0.45"/>
<rect x="444.0" y="147.1" width="7.5" height="11.6" fill="rgb(186,186,234)" fill-opacity="0.60"/>
<rect x="451.5" y="147.1" width="7.5" height="11.6" fill="rgb(186,186,234)" fill-opacity="0.55"/>
<rect x="459.0" y="147.1" width="7.5" height="11.6" fill="rgb(186,186,234)" fill-opacity="0.50"/>
<rect x="466.5" y="147.1" width="7.5" height="11.6" fill="rgb(186,186,234)" fill-opacity="0.70"/>
<rect x="474.0" y="147.1" width="7.5" height="11.6" fill="rgb(186,186,234)" fill-opacity="0.65"/>
<rect x="481.5" y="147.1" width="7.5" height="11.6" fill="rgb(186,186,234)" fill-opacity="0.45"/>
<rect x="489.0" y="147.1" width="7.5" height="11.6" fill="rgb(186,186,234)" fill-opacity="0.35"/>
<rect x="496.5" y="147.1" width="7.5" height="11.6" fill="rgb(186,186,234)" fill-opacity="0.30"/>
<rect x="504.0" y="147.1" width="7.5" height="11.6" fill="rgb(186,186,234)" fill-opacity="0.25"/>
<rect x="320.7" y="158.7" width="7.5" height="11.6" fill="rgb(186,186,234)" fill-opacity="0.55"/>
<rect x="328.2" y="158.7" width="7.5" height="11.6" fill="rgb(186,186,234)" fill-opacity="0.80"/>
<rect x="335.7" y="158.7" width="7.5" height="11.6" fill="rgb(186,186,234)" fill-opacity="0.75"/>
<rect x="343.2" y="158.7" width="7.5" height="11.6" fill="rgb(186,186,234)" fill-opacity="0.45"/>
<rect x="350.7" y="158.7" width="7.5" height="11.6" fill="rgb(186,186,234)" fill-opacity="0.25"/>
<rect x="358.2" y="158.7" width="7.5" height="11.6" fill="rgb(186,186,234)" fill-opacity="0.20"/>
<rect x="365.7" y="158.7" width="7.5" height="11.6" fill="rgb(186,186,234)" fill-opacity="0.20"/>
<rect x="373.2" y="158.7" width="7.5" height="11.6" fill="rgb(186,186,234)" fill-opacity="0.40"/>
<rect x="375.5" y="158.7" width="7.5" height="11.6" fill="rgb(186,186,234)" fill-opacity="0.50"/>
<rect x="383.0" y="158.7" width="7.5" height="11.6" fill="rgb(186,186,234)" fill-opacity="0.90"/>
<rect x="390.5" y="158.7" width="7.5" height="11.6" fill="rgb(186,186,234)" fill-opacity="0.90"/>
<rect x="398.0" y="158.7" width="7.5" height="11.6" fill="rgb(186,186,234)" fill-opacity="0.55"/>
<rect x="405.5" y="158.7" width="7.5" height="11.6" fill="rgb(186,186,234)" fill-opacity="0.25"/>
<rect x="413.0" y="158.7" width="7.5" height="11.6" fill="rgb(186,186,234)" fill-opacity="0.20"/>
<rect x="420.5" y="158.7" width="7.5" height="11.6" fill="rgb(186,186,234)" fill-opacity="0.20"/>
<rect x="428.0" y="158.7" width="7.5" height="11.6" fill="rgb(186,186,234)" fill-opacity="0.20"/>
<rect x="436.5" y="158.7" width="7.5" height="11.6" fill="rgb(186,186,234)" fill-opacity="0.65"/>
<rect x="444.0" y="158.7" width="7.5" height="11.6" fill="rgb(186,186,234)" fill-opacity="0.80"/>
<rect x="451.5" y="158.7" width="7.5" height="11.6" fill="rgb(186,186,234)" fill-opacity="0.75"/>
<rect x="459.0" y="158.7" width="7.5" height="11.6" fill="rgb(186,186,234)" fill-opacity="0.70"/>
<rect x="466.5" y="158.7" width="7.5" height="11.6" fill="rgb(186,186,234)" fill-opacity="0.90"/>
<rect x="474.0" y="158.7" width="7.5" height="11.6" fill="rgb(186,186,234)" fill-opacity="0.85"/>
<rect x="481.5" y="158.7" width="7.5" height="11.6" fill="rgb(186,186,234)" fill-opacity="0.65"/>
<rect x="489.0" y="158.7" width="7.5" height="11.6" fill="rgb(186,186,234)" fill-opacity="0.50"/>
<rect x="496.5" y="158.7" width="7.5" height="11.6" fill="rgb(186,186,234)" fill-opacity="0.45"/>
<rect x="504.0" y="158.7" width="7.5" height="11.6" fill="rgb(186,186,234)" fill-opacity="0.40"/>
<rect x="514.0" y="135.5" width="7.5" height="11.6" fill="rgb(186,186,234)" fill-opacity="0.25"/>
<rect x="521.5" y="135.5" width="0.5" height="11.6" fill="rgb(186,186,234)" fill-opacity="0.25"/>
<rect x="820.0" y="136.5" width="7.5" height="9.8" fill="rgb(186,186,234)" fill-opacity="0.20"/>
<rect x="827.5" y="136.5" width="7.5" height="9.8" fill="rgb(186,186,234)" fill-opacity="0.60"/>
<rect x="835.0" y="136.5" width="7.5" height="9.8" fill="rgb(186,186,234)" fill-opacity="0.65"/>
<rect x="842.5" y="136.5" width="7.5" height="9.8" fill="rgb(186,186,234)" fill-opacity="0.70"/>
<rect x="850.0" y="136.5" width="7.5" height="9.8" fill="rgb(186,186,234)" fill-opacity="0.70"/>
<rect x="857.5" y="136.5" width="7.5" height="9.8" fill="rgb(186,186,234)" fill-opacity="0.95"/>
<rect x="865.0" y="136.5" width="7.5" height="9.8" fill="rgb(186,186,234)" fill-opacity="1.00"/>
<rect x="872.5" y="136.5" width="7.5" height="9.8" fill="rgb(186,186,234)" fill-opacity="0.65"/>
<rect x="880.0" y="136.5" width="7.5" height="9.8" fill="rgb(186,186,234)" fill-opacity="0.60"/>
<rect x="887.5" y="136.5" width="0.5" height="9.8" fill="rgb(186,186,234)" fill-opacity="0.20"/>
<rect x="820.0" y="148.1" width="7.5" height="9.8" fill="rgb(186,186,234)" fill-opacity="0.15"/>
<rect x="827.5" y="148.1" width="7.5" height="9.8" fill="rgb(186,186,234)" fill-opacity="0.45"/>
<rect x="835.0" y="148.1" width="7.5" height="9.8" fill="rgb(186,186,234)" fill-opacity="0.50"/>
<rect x="842.5" y="148.1" width="7.5" height="9.8" fill="rgb(186,186,234)" fill-opacity="0.50"/>
<rect x="850.0" y="148.1" width="7.5" height="9.8" fill="rgb(186,186,234)" fill-opacity="0.50"/>
<rect x="857.5" y="148.1" width="7.5" height="9.8" fill="rgb(186,186,234)" fill-opacity="0.70"/>
<rect x="865.0" y="148.1" width="7.5" height="9.8" fill="rgb(186,186,234)" fill-opacity="0.70"/>
<rect x="872.5" y="148.1" width="7.5" height="9.8" fill="rgb(186,186,234)" fill-opacity="0.45"/>
<rect x="880.0" y="148.1" width="7.5" height="9.8" fill="rgb(186,186,234)" fill-opacity="0.25"/>
<rect x="887.5" y="148.1" width="0.5" height="9.8" fill="rgb(186,186,234)" fill-opacity="0.15"/>
<rect x="820.0" y="159.7" width="7.5" height="9.8" fill="rgb(186,186,234)" fill-opacity="0.40"/>
<rect x="827.5" y="159.7" width="7.5" height="9.8" fill="rgb(186,186,234)" fill-opacity="0.70"/>
<rect x="835.0" y="159.7" width="7.5" height="9.8" fill="rgb(186,186,234)" fill-opacity="0.70"/>
<rect x="842.5" y="159.7" width="7.5" height="9.8" fill="rgb(186,186,234)" fill-opacity="0.75"/>
<rect x="850.0" y="159.7" width="7.5" height="9.8" fill="rgb(186,186,234)" fill-opacity="0.75"/>
<rect x="857.5" y="159.7" width="7.5" height="9.8" fill="rgb(186,186,234)" fill-opacity="0.95"/>
<rect x="865.0" y="159.7" width="7.5" height="9.8" fill="rgb(186,186,234)" fill-opacity="0.95"/>
<rect x="872.5" y="159.7" width="7.5" height="9.8" fill="rgb(186,186,234)" fill-opacity="0.70"/>
<rect x="880.0" y="159.7" width="7.5" height="9.8" fill="rgb(186,186,234)" fill-opacity="0.60"/>
<rect x="887.5" y="159.7" width="0.5" height="9.8" fill="rgb(186,186,234)" fill-opacity="0.40"/>
<rect x="295" y="84.600" width="205" height="4.600" fill="#fdf0a0" fill-opacity=".45"/>
<defs><clipPath id="c4"><rect x="316" y="112.600" width="200" height="4"/></clipPath><clipPath id="c1"><rect x="316" y="78" width="200" height="4"/></clipPath></defs>
<g font-family="Liberation Sans, sans-serif" font-size="6.600" font-weight="bold" fill="#2222b8">
<g clip-path="url(#c4)">
<text x="321" y="118.600" textLength="44" lengthAdjust="spacingAndGlyphs">43010627-00-0022</text>
<text x="380" y="118.600" textLength="44" lengthAdjust="spacingAndGlyphs">43010627-00-0022</text>
<text x="437.500" y="118.600" textLength="44" lengthAdjust="spacingAndGlyphs">43010627-00-0022</text>
</g>
<g clip-path="url(#c1)">
<text x="408" y="84" textLength="20" lengthAdjust="spacingAndGlyphs">00-0022</text>
<text x="437.500" y="84" textLength="44" lengthAdjust="spacingAndGlyphs">43010627-00-0022</text>
</g>
<text x="478.500" y="97.800" fill-opacity=".85" font-size="6.200">52...</text>
<text x="478.500" y="109.400" fill-opacity=".85" font-size="6.200">52...</text>
<text x="505" y="143.800" fill-opacity=".9" font-size="6.200">B</text>
<text x="320.500" y="155.600" fill-opacity=".7" font-size="6.200" font-weight="normal">46</text>
<text x="320.500" y="167.200" fill-opacity=".7" font-size="6.200" font-weight="normal">13</text>
<text x="822" y="155.800" fill-opacity=".7" font-size="6.200" font-weight="normal">46</text>
<text x="884" y="155.800" fill-opacity=".7" font-size="6.200" font-weight="normal">0</text>
</g>
<!-- focus cell lines -->
<path d="M318.500 88.600h57" stroke="#fff" stroke-width="1"/>
<path d="M318.500 100.100h57" stroke="#111" stroke-width="1.200"/>
<!-- toolbar icon -->
<path d="M297.600 52.600h5.400M297.600 55.400h5.400M297.600 58.200h5.400" stroke="#9a9a9a" stroke-width=".9"/>
<path d="M297.400 60.200h6" stroke="#5aa646" stroke-width=".9"/>
<path d="M298.600 51.400v2.400M298.600 54.200v2.400" stroke="#7a7a7a" stroke-width=".8"/>
<path d="M306.200 54.200h4.800l-2.400 3.200z" fill="#111"/>
<!-- search icon -->
<circle cx="891" cy="55" r="2.700" fill="#eef2f6" stroke="#777" stroke-width="1"/>
<path d="M893 57.200l2.400 2.400" stroke="#555" stroke-width="1.400" stroke-linecap="round"/>
<!-- scroll arrows -->
<path d="M297.200 173l4.200-2.800v5.600z" fill="#111"/>
<path d="M889.200 172.600l-4.200-2.800v5.600z" fill="#111"/>
<path d="M892.600 84.200h4.400l-2.200-3.800z" fill="#111"/>
<path d="M892.600 161.400h4.400l-2.200 3.800z" fill="#111"/>
</svg>
<div class="abs" style="left:294.500px;top:196px;width:602.500px;height:285px;background:#f6f6f6"></div>
<!-- tabs -->
<div id="tabs"></div>
<div class="abs" style="left:300px;top:181px;width:37px;height:15px;background:#f6f6f6"></div>
<div class="tab" style="left:304px">基本属性</div>
<div class="tab" style="left:356.500px">产品</div>
<div class="tab" style="left:394.300px">零部件</div>
<div class="tab" style="left:427.800px">附件</div>
<div class="tab" style="left:454px">[变更历史]</div>

<svg class="abs" style="left:340px;top:182px" width="60" height="14" viewBox="340 182 60 14">
<rect x="344" y="184.500" width="4.600" height="4.400" rx=".6" fill="#d8204a"/><rect x="345.500" y="186" width="1.600" height="1.500" fill="#fff"/>
<rect x="349.400" y="184.500" width="4.600" height="4.400" rx=".6" fill="#3a8ae0"/><rect x="350.900" y="186" width="1.600" height="1.500" fill="#cfe4fb"/>
<rect x="344" y="189.600" width="4.600" height="4.400" rx=".6" fill="#50c030"/><rect x="345.500" y="191.100" width="1.600" height="1.500" fill="#d8f4c8"/>
<rect x="349.400" y="189.600" width="4.600" height="4.400" rx=".6" fill="#c8d838"/><rect x="350.900" y="191.100" width="1.600" height="1.500" fill="#f0f4b0"/>
<rect x="382" y="184.500" width="4.400" height="4.400" rx=".6" fill="#a01030"/>
<rect x="387.200" y="184.500" width="4.400" height="4.400" rx=".6" fill="#3a8ae0"/><rect x="388.600" y="186" width="1.600" height="1.500" fill="#cfe4fb"/>
<rect x="382" y="189.600" width="4.400" height="4.400" rx=".6" fill="#3aa838"/>
<path d="M387 194a4.600 4.600 0 0 1 4.600-4.400v4.400z" fill="#e8c020"/>
<path d="M387 194a4.600 4.600 0 0 1 4.600-4.400" fill="none" stroke="#d82020" stroke-width="1.400"/>
</svg>
<!-- form -->
<div class="lbl" style="left:300px;top:200.5px">物料编码</div>
<div class="inp" style="left:360.200px;top:200.5px;width:233.800px">43101962 CMK2024070-CHP0500-0006 V1.0 充电桩转接线组</div>
<div class="lbl" style="left:600px;top:200.5px">文件名称</div>
<div class="inp" style="left:660px;top:200.5px;width:233.800px">43101962 CMK2024070-CHP0500-0006 V1.0 充电桩转接线组</div>
<div class="lbl" style="left:300px;top:217.5px">附件</div>
<div class="inp" style="left:360.200px;top:217.5px;width:233.800px">43101962 CMK2024070-CHP0500-0006 V1.0 充电桩转接线组</div>
<div class="lbl" style="left:600px;top:217.5px">文件版本</div>
<div class="inp" style="left:660px;top:217.5px;width:233.800px"></div>
<div class="lbl" style="left:300px;top:234.5px">文件类型</div>
<div class="inp" style="left:360.200px;top:234.5px;width:233.800px"></div>
<div class="lbl" style="left:600px;top:234.5px">大类</div>
<div class="inp" style="left:660px;top:234.5px;width:233.800px"></div>
<div class="lbl" style="left:300px;top:251.5px">小类</div>
<div class="inp" style="left:360.200px;top:251.5px;width:233.800px"></div>
<div class="lbl" style="left:600px;top:251.5px">密级</div>
<div class="inp" style="left:660px;top:251.5px;width:233.800px"></div>
<div class="lbl" style="left:300px;top:268.5px">幅面</div>
<div class="inp" style="left:360.200px;top:268.5px;width:233.800px;background:#edf2f9"></div>
<div class="lbl" style="left:600px;top:268.5px">页数</div>
<div class="inp" style="left:660px;top:268.5px;width:233.800px"></div>
<div class="lbl" style="left:300px;top:285.5px">缩略图名称</div>
<div class="inp" style="left:360.200px;top:285.5px;width:233.800px"></div>
<div class="lbl" style="left:600px;top:285.5px"><span style="font-weight:normal;font-size:6.400px">PDF</span>浏览图名称</div>
<div class="inp" style="left:660px;top:285.5px;width:233.800px"></div>
<div class="lbl" style="left:300px;top:302.5px">文件大小</div>
<div class="inp" style="left:360.200px;top:302.5px;width:233.800px">63.42 KB</div>
<div class="lbl" style="left:600px;top:302.5px">文件修改时间</div>
<div class="inp" style="left:660px;top:302.5px;width:233.800px">2024-07-05 16:21</div>
<div class="lbl" style="left:300px;top:319.5px">模板标识</div>
<div class="inp" style="left:360.200px;top:319.5px;width:233.800px"></div>
<div class="lbl" style="left:600px;top:319.5px">发布状态</div>
<div class="inp" style="left:660px;top:319.5px;width:233.800px">开发版</div>
<div class="lbl" style="left:300px;top:336.5px">备注</div>
<div class="inp" style="left:360.200px;top:336.5px;width:533.800px"></div>
<div class="lbl" style="left:300px;top:353.5px">创建时间</div>
<div class="inp" style="left:360.200px;top:353.5px;width:233.800px">2024-07-05 16:32</div>
<div class="lbl" style="left:600px;top:353.5px">修改时间</div>
<div class="inp" style="left:660px;top:353.5px;width:233.800px">2024-07-05 16:32</div>
<div class="lbl" style="left:300px;top:370.5px">创建者</div>
<div class="inp" style="left:360.200px;top:370.5px;width:233.800px">GWS邹文娟</div>
<div class="lbl" style="left:600px;top:370.5px">修改者</div>
<div class="inp" style="left:660px;top:370.5px;width:233.800px">GWS邹文娟</div>
</div></div>
</body>
</html>
